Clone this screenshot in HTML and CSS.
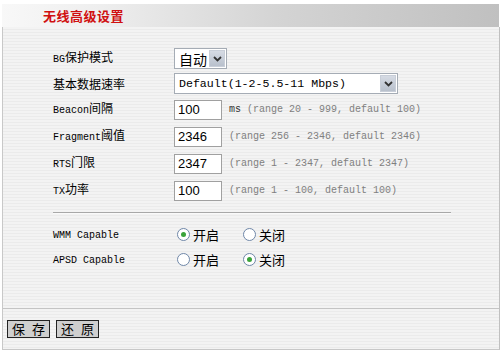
FILE: index.html
```html
<!DOCTYPE html>
<html lang="zh-CN">
<head>
    <meta charset="UTF-8">
    <title>无线高级设置</title>
    <link rel="stylesheet" href="styles.css">
</head>
<body>
    <div class="pag">
        <div class="cab">
            <span class="tit">无线高级设置</span>
        </div>

        <div class="pan">
            <div class="frm">
                <div class="fila f25">
                    <div class="lab"><span class="en">BG</span>保护模式</div>
                    <div class="sel s1">
                        <span class="val">自动</span>
                        <span class="btn"><svg width="9" height="6" viewBox="0 0 9 6"><path d="M1 1 L4.5 4.5 L8 1" fill="none" stroke="#333" stroke-width="1.8"/></svg></span>
                    </div>
                </div>
                <div class="fila f25">
                    <div class="lab">基本数据速率</div>
                    <div class="sel s2">
                        <span class="val mono">Default(1-2-5.5-11 Mbps)</span>
                        <span class="btn"><svg width="9" height="6" viewBox="0 0 9 6"><path d="M1 1 L4.5 4.5 L8 1" fill="none" stroke="#333" stroke-width="1.8"/></svg></span>
                    </div>
                </div>
                <div class="fila">
                    <div class="lab"><span class="en">Beacon</span>间隔</div>
                    <input class="txt" type="text" value="100">
                    <span class="rng"><b>ms</b> (range 20 - 999, default 100)</span>
                </div>
                <div class="fila">
                    <div class="lab"><span class="en">Fragment</span>阈值</div>
                    <input class="txt" type="text" value="2346">
                    <span class="rng">(range 256 - 2346, default 2346)</span>
                </div>
                <div class="fila">
                    <div class="lab"><span class="en">RTS</span>门限</div>
                    <input class="txt" type="text" value="2347">
                    <span class="rng">(range 1 - 2347, default 2347)</span>
                </div>
                <div class="fila">
                    <div class="lab"><span class="en">TX</span>功率</div>
                    <input class="txt" type="text" value="100">
                    <span class="rng">(range 1 - 100, default 100)</span>
                </div>

                <div class="sep"></div>

                <div class="fila f25">
                    <div class="lab"><span class="en">WMM Capable</span></div>
                    <label class="rad"><span class="pto on"></span>开启</label>
                    <label class="rad"><span class="pto"></span>关闭</label>
                </div>
                <div class="fila f25">
                    <div class="lab"><span class="en">APSD Capable</span></div>
                    <label class="rad"><span class="pto"></span>开启</label>
                    <label class="rad"><span class="pto on"></span>关闭</label>
                </div>
            </div>

            <div class="pie">
                <button class="bot">保 存</button>
                <button class="bot">还 原</button>
            </div>
        </div>
    </div>
</body>
</html>
```

FILE: styles.css
```css
body {
    margin: 0;
    background: #ffffff;
    font-family: "Noto Sans CJK SC", "Liberation Sans", sans-serif;
    font-size: 12px;
    color: #000;
}

.pag {
    width: 498px;
    margin-left: 2px;
    padding-top: 4px;
}

.cab {
    height: 23px;
    margin-right: 1px;
    background: linear-gradient(to right, #f8f8f8 0%, #eeeeee 20%, #d4d4d4 55%, #c0c0c0 100%);
    display: flex;
    align-items: center;
    padding-left: 41px;
}

.tit {
    color: #d01010;
    font-weight: bold;
    font-size: 13px;
    letter-spacing: 0.5px;
}

.pan {
    height: 322px;
    border-left: 1px solid #c8c8c8;
    border-right: 1px solid #c0c0c0;
    border-bottom: 1px solid #c8c8c8;
    background: repeating-linear-gradient(to bottom, #f3f3f3 0px, #f3f3f3 2px, #ebebeb 2px, #ebebeb 3px);
    display: flex;
    flex-direction: column;
}

.frm {
    box-sizing: border-box;
    padding-left: 50px;
    padding-top: 19px;
    height: 281px;
}

.fila {
    display: flex;
    align-items: center;
    height: 27px;
}

.f25 {
    height: 25px;
}

.lab {
    width: 121px;
    flex-shrink: 0;
    line-height: 14px;
}

.en {
    font-family: "Liberation Mono", monospace;
    font-size: 10px;
}

.sel {
    height: 19px;
    border: 1px solid #a5acb5;
    background: #fff;
    display: flex;
    align-items: center;
    justify-content: space-between;
    padding: 0 1px 0 4px;
}

.s1 {
    width: 46px;
}

.s2 {
    width: 217px;
}

.val {
    font-size: 14px;
    line-height: 16px;
}

.val.mono {
    font-family: "Liberation Mono", monospace;
    font-size: 11.6px;
    white-space: nowrap;
}

.sel .btn {
    width: 16px;
    height: 17px;
    background: linear-gradient(to bottom, #d6dbe4, #b8c0cc);
    border: 1px solid #c8ced8;
    box-sizing: border-box;
    display: flex;
    align-items: center;
    justify-content: center;
}

.txt {
    width: 48px;
    height: 20px;
    box-sizing: border-box;
    border: 1px solid #a0a0a0;
    background: #fff;
    padding: 0 3px;
    margin: 0;
    font-family: "Liberation Sans", sans-serif;
    font-size: 13px;
    color: #000;
    flex-shrink: 0;
}

.rng {
    font-family: "Liberation Mono", monospace;
    font-size: 10px;
    color: #808080;
    margin-left: 7px;
    white-space: nowrap;
}

.rng b {
    font-weight: normal;
    color: #333;
}

.sep {
    width: 398px;
    height: 0;
    border-top: 1px solid #a8a8a8;
    border-bottom: 1px solid #fafafa;
    margin: 8px 0 8px 0;
}

.rad {
    display: flex;
    align-items: center;
    font-size: 13px;
    margin-left: 3px;
    margin-right: 21px;
}

.pto {
    width: 11px;
    height: 11px;
    border: 1px solid #6f87a8;
    border-radius: 50%;
    background: #fff;
    margin-right: 3px;
    position: relative;
}

.pto.on::after {
    content: "";
    position: absolute;
    left: 3px;
    top: 3px;
    width: 5px;
    height: 5px;
    border-radius: 50%;
    background: #3aa33a;
}

.pie {
    border-top: 1px solid #c4c4c4;
    padding: 11px 0 0 4px;
    display: flex;
    gap: 6px;
}

.bot {
    width: 43px;
    height: 18px;
    padding: 0;
    margin: 0;
    border: 1px solid #222;
    background: #cfcfcf;
    font-family: "Noto Sans CJK SC", sans-serif;
    font-size: 13px;
    line-height: 14px;
    word-spacing: 4px;
    white-space: nowrap;
    color: #000;
}
```
